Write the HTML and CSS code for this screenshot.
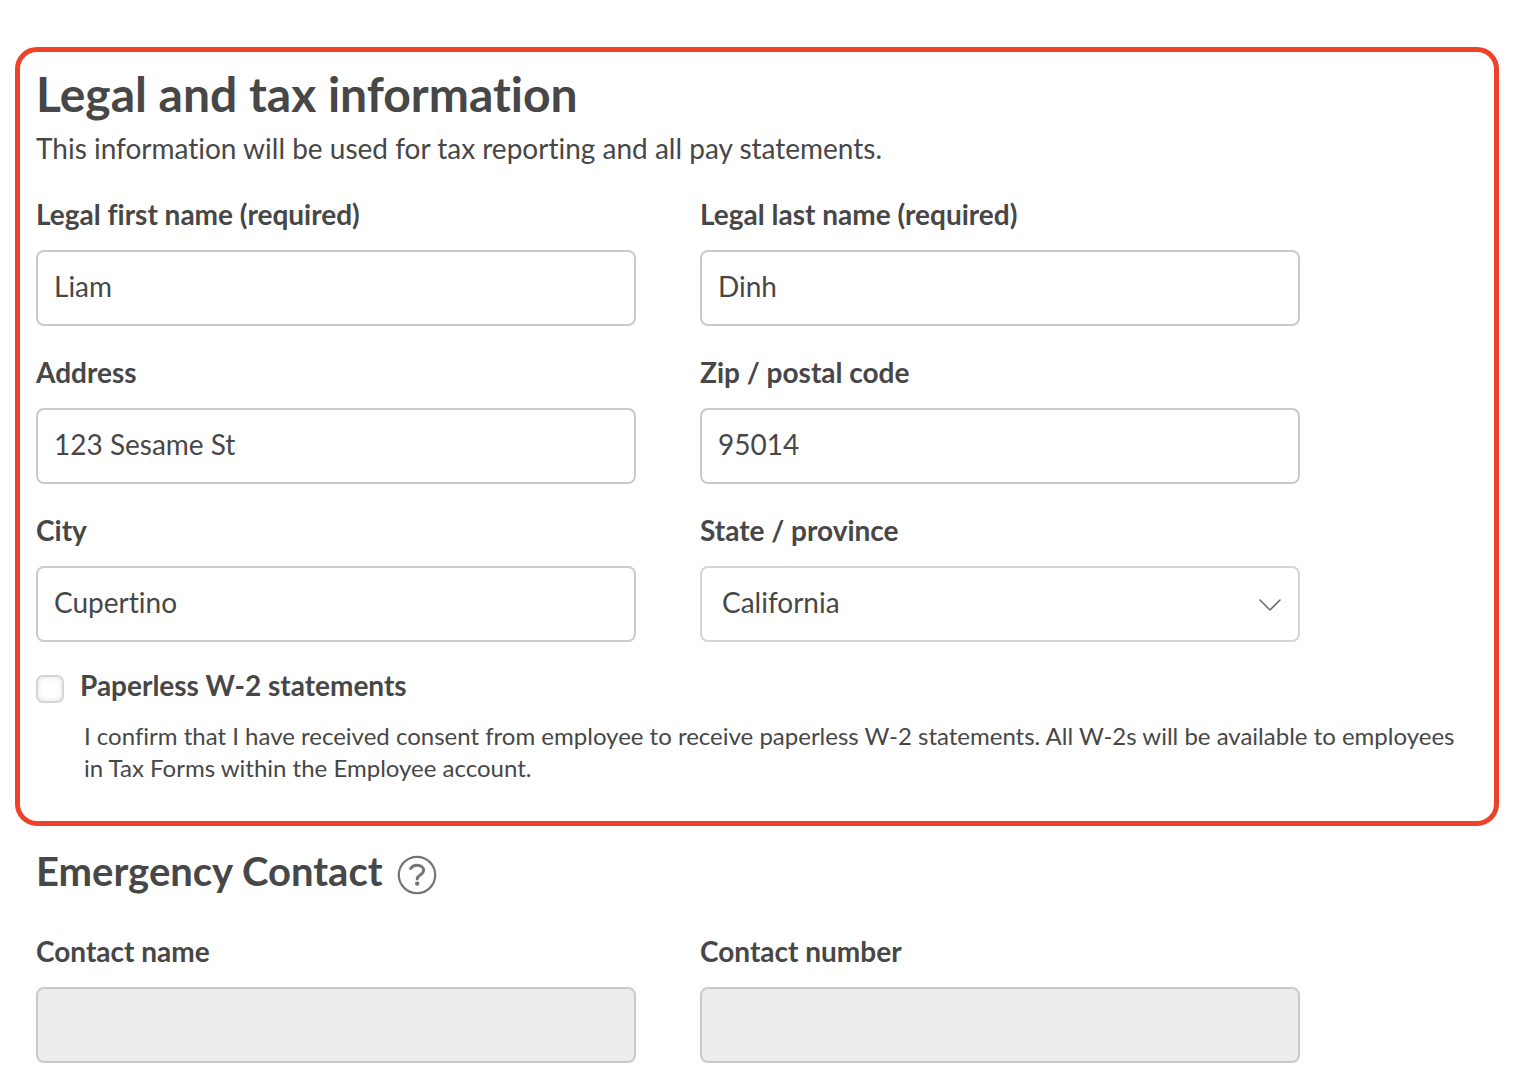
FILE: index.html
```html
<!DOCTYPE html>
<html lang="en">
  <head>
    <meta charset="UTF-8">
    <meta name="viewport" content="width=device-width, initial-scale=1">
    <title>Employee information</title>
    <link rel="stylesheet" href="styles.css">
  </head>
  <body>
    <form class="employee-form">
      <!-- Legal and tax information -->
      <section class="section highlighted">
        <h1>Legal and tax information</h1>
        <p class="intro">This information will be used for tax reporting and all pay statements.</p>

        <div class="fields">
          <div class="field">
            <label for="first-name">Legal first name (required)</label>
            <input type="text" id="first-name" value="Liam" required>
          </div>
          <div class="field">
            <label for="last-name">Legal last name (required)</label>
            <input type="text" id="last-name" value="Dinh" required>
          </div>
          <div class="field">
            <label for="address">Address</label>
            <input type="text" id="address" value="123 Sesame St">
          </div>
          <div class="field">
            <label for="zip">Zip / postal code</label>
            <input type="text" id="zip" value="95014">
          </div>
          <div class="field">
            <label for="city">City</label>
            <input type="text" id="city" value="Cupertino">
          </div>
          <div class="field">
            <label for="state">State / province</label>
            <div class="select">
              <select id="state">
                <option selected>California</option>
              </select>
              <svg class="chevron" width="22" height="12" viewBox="0 0 22 12" aria-hidden="true">
                <path d="M1 1l10 10L21 1" fill="none" stroke="#6b6b6b" stroke-width="1.6" stroke-linecap="round" stroke-linejoin="round"/>
              </svg>
            </div>
          </div>
        </div>

        <div class="paperless">
          <input type="checkbox" id="paperless" aria-describedby="paperless-note">
          <label for="paperless">Paperless W-2 statements</label>
        </div>
        <p class="note" id="paperless-note">I confirm that I have received consent from employee to receive paperless W-2 statements. All W-2s will be available to employees in Tax Forms within the Employee account.</p>
      </section>

      <!-- Emergency contact -->
      <section class="section">
        <div class="heading">
          <h2>Emergency Contact</h2>
          <button type="button" class="help" aria-label="Help">
            <svg width="40" height="40" viewBox="0 0 40 40" aria-hidden="true">
              <circle cx="20" cy="20" r="18.2" fill="none" stroke="#757575" stroke-width="2.2"/>
              <path d="M13.6 13.6C15 11.3 17.2 10.3 20 10.3c3.8 0 6.6 1.900 6.600 5 0 4.900-6.400 4.500-6.400 8.700" fill="none" stroke="#757575" stroke-width="2.900" stroke-linecap="round"/>
              <circle cx="20.200" cy="28.600" r="2.200" fill="#757575"/>
            </svg>
          </button>
        </div>

        <div class="fields">
          <div class="field">
            <label for="contact-name">Contact name</label>
            <input type="text" id="contact-name" disabled>
          </div>
          <div class="field">
            <label for="contact-number">Contact number</label>
            <input type="text" id="contact-number" disabled>
          </div>
        </div>
      </section>
    </form>
  </body>
</html>
```
FILE: styles.css
```css
* {
    box-sizing: border-box;
}

body {
    margin: 0;
    background: #fff;
    color: #474747;
    font-family: Lato, "Open Sans", sans-serif;
    font-size: 28px;
    font-variant-ligatures: none;
    line-height: 32px;
}

h1, h2, p {
    margin: 0;
}

h1 {
    font-size: 48px;
    line-height: 56px;
}

h2 {
    font-size: 40px;
    line-height: 48px;
}

.employee-form {
    padding: 47px 19px 23px 15px;
}

/* Both sections share the border width so their content lines up */
.section {
    padding: 16px;
    border: 5px solid transparent;
}

.highlighted {
    padding-top: 14px;
    padding-bottom: 37px;
    border-color: #ee4127;
    border-radius: 22px;
}

.intro {
    margin-top: 10px;
}

/* Two column form grid */
.fields {
    display: grid;
    grid-template-columns: 1fr 1fr;
    gap: 30px 64px;
    max-width: 1264px;
    margin-top: 34px;
}

.field {
    display: flex;
    flex-direction: column;
    gap: 20px;
}

label {
    font-weight: bold;
}

input[type="text"],
select {
    width: 100%;
    height: 76px;
    padding: 0 16px 4px;
    border: 2px solid #cacaca;
    border-radius: 8px;
    background: #fff;
    color: #474747;
    font: inherit;
}

input[type="text"]:disabled {
    background: #ededed;
}

select {
    appearance: none;
    padding-left: 20px;
    border-color: #d4d4d4;
}

.select {
    position: relative;
}

.chevron {
    position: absolute;
    top: 33px;
    right: 19px;
    pointer-events: none;
}

/* Paperless checkbox */
.paperless {
    display: flex;
    align-items: flex-end;
    gap: 16px;
    margin-top: 27px;
}

.paperless input {
    appearance: none;
    width: 28px;
    height: 28px;
    margin: 0;
    border: 2px solid #d4d4d4;
    border-radius: 7px;
    background: #fff;
    box-shadow: inset 0 0 6px #e4e4e4;
}

.paperless label {
    padding-bottom: 2px;
}

.note {
    margin: 17px 0 0 48px;
    font-size: 24px;
}

/* Emergency contact heading */
.heading {
    display: flex;
    align-items: flex-end;
    gap: 14px;
}

.heading + .fields {
    margin-top: 40px;
}

.help {
    display: flex;
    padding: 0;
    border: 0;
    background: none;
    cursor: pointer;
}
```
